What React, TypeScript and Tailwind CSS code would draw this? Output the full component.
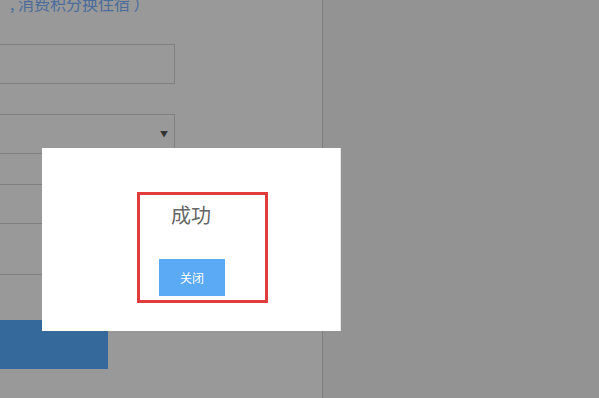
export default function App() {
  return (
    <div
      className="relative w-[599px] h-[398px] overflow-hidden flex bg-[#939393]"
      style={{ fontFamily: '"Noto Sans CJK SC", "Noto Sans", sans-serif' }}
    >
      {/* left form column (dimmed by the mask) */}
      <div className="w-[323px] h-full bg-[#999999] border-r border-[#7e7e7e] flex flex-col">
        <div className="-mt-[5px] pl-[10px] text-[16px] leading-[16px] text-[#4c6c9c] whitespace-nowrap">
          , 消费积分换住宿 ）
        </div>
        <div className="mt-[33px] w-[176px] h-[40px] -ml-px border border-[#808080]" />
        <div className="mt-[30px] w-[176px] h-[40px] -ml-px border border-[#808080] flex items-center justify-end pr-[6px]">
          <span className="text-[8px] text-[#333]">▼</span>
        </div>
        <div className="mt-[30px] w-[176px] h-[40px] -ml-px border border-[#808080]" />
        <div className="w-[176px] h-[51px] -ml-px border-b border-x border-[#808080]" />
        <div className="mt-[45px] w-[108px] h-[49px] bg-[#35699b]" />
      </div>

      {/* modal */}
      <div className="absolute left-[42px] top-[148px] w-[299px] h-[183px] bg-white border-r border-[#e6e6e6] flex flex-col items-center">
        <div className="mt-[57px] text-[20px] leading-[20px] text-[#666]">成功</div>
        <button className="mt-[34px] ml-[2px] w-[66px] h-[37px] bg-[#5aaaf6] text-white text-[12px]">
          关闭
        </button>
        <div className="absolute left-[95px] top-[44px] w-[131px] h-[111px] border-[3px] border-[#e03c3c]" />
      </div>
    </div>
  );
}
